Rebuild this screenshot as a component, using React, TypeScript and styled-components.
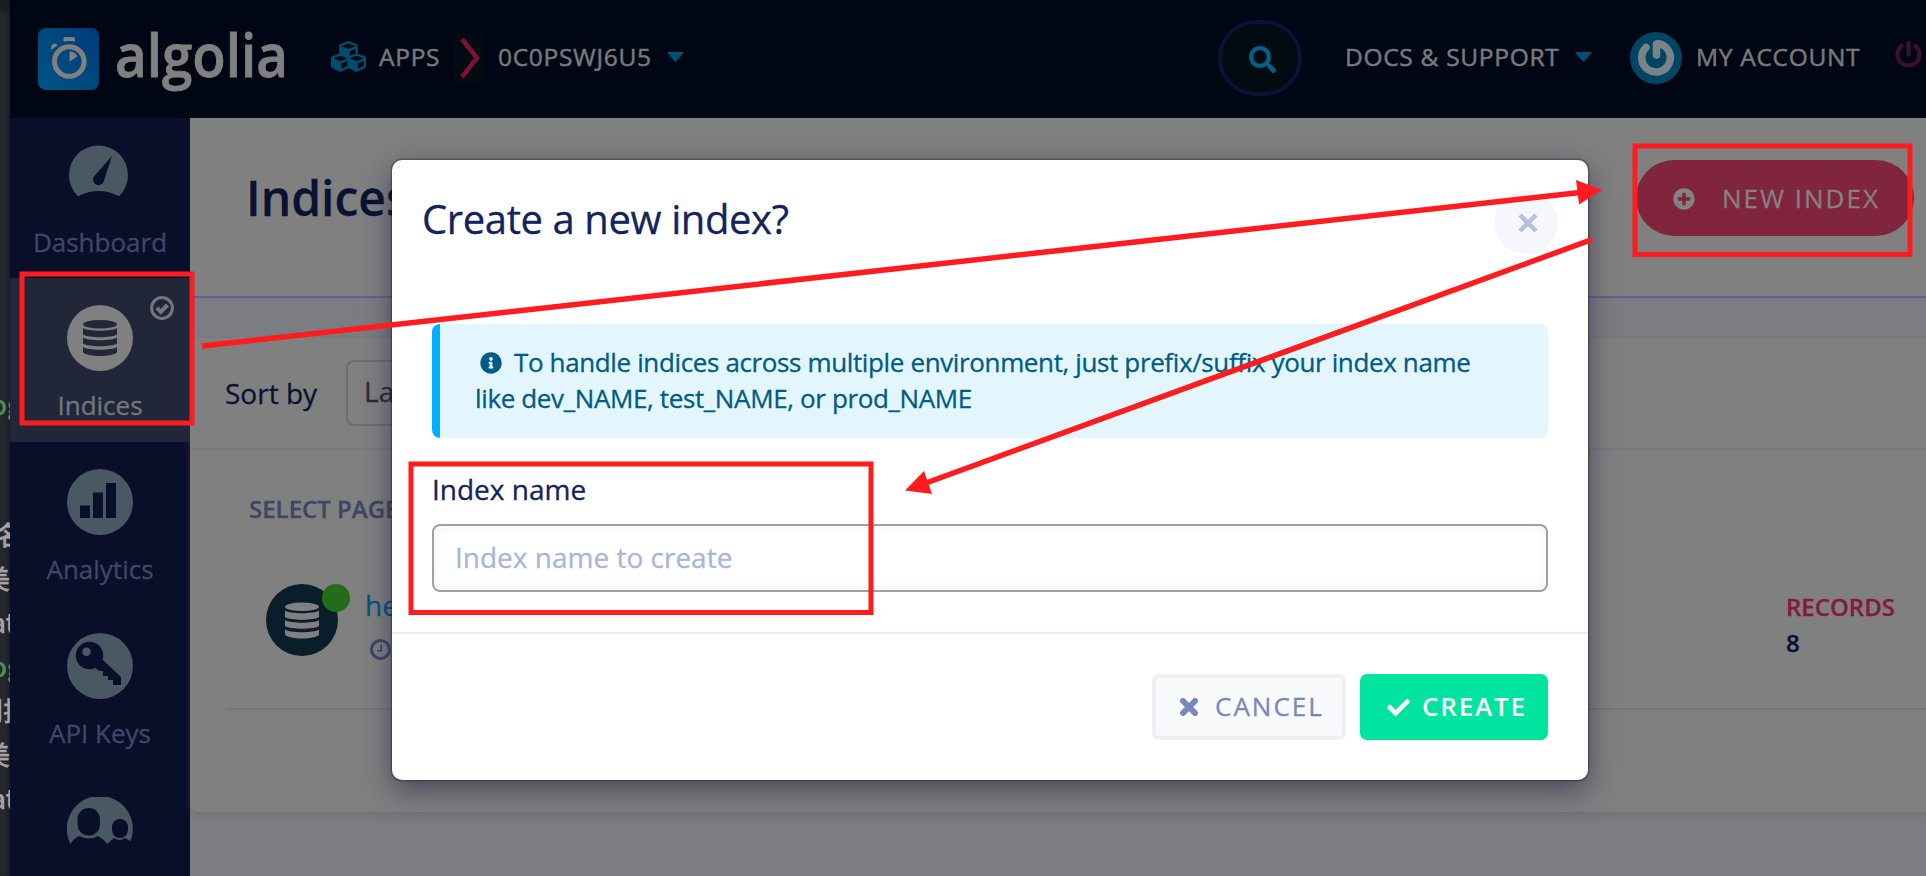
import React from "react";
import styled, { createGlobalStyle } from "styled-components";
import { FaCubes, FaSearch, FaPlusCircle, FaInfoCircle, FaPowerOff, FaCheck } from "react-icons/fa";

const GlobalStyle = createGlobalStyle`
  * { box-sizing: border-box; }
  body { margin: 0; background: #22252d; overflow: hidden; }
  body, button, input { font-family: "Open Sans", "Noto Sans", sans-serif; -webkit-text-stroke: 0.3px; }
`;

const Screen = styled.div`
  position: relative;
  display: flex;
  width: 1926px;
  height: 876px;
  overflow: hidden;
`;

const EditorStrip = styled.aside`
  flex: none;
  width: 10px;
  height: 876px;
  padding-top: 382px;
  overflow: hidden;
  background: linear-gradient(#1b1d20 0 8px, #25272e 14px);
  box-shadow: inset -3px 0 4px -2px #14161b;
`;

const EditorLine = styled.div<{ $green?: boolean; $gap?: number; $shift?: number }>`
  height: 44px;
  margin-top: ${(p) => p.$gap ?? 0}px;
  margin-left: ${(p) => p.$shift ?? 0}px;
  font: 500 26px/44px "Noto Sans CJK SC", sans-serif;
  white-space: nowrap;
  color: ${(p) => (p.$green ? "#4c8f57" : "#a3a3a3")};
`;

const Page = styled.div`
  flex: 1;
  display: flex;
  flex-direction: column;
`;

const TopBar = styled.header`
  display: flex;
  align-items: center;
  height: 118px;
  padding: 0 0 0 28px;
  background: #000613;
  white-space: nowrap;
  overflow: hidden;
`;

const TopLink = styled.span<{ $w: number; $ml: number }>`
  width: ${(p) => p.$w}px;
  margin-left: ${(p) => p.$ml}px;
  flex: none;
  font-size: 24.5px;
  letter-spacing: 0.7px;
  line-height: 34px;
  margin-top: -5px;
  color: #77797e;
  -webkit-text-stroke: 0.5px;
`;

const TopIcon = styled.span<{ $w: number; $ml: number; $c: string; $mt?: number }>`
  display: flex;
  flex: none;
  width: ${(p) => p.$w}px;
  margin-left: ${(p) => p.$ml}px;
  margin-top: ${(p) => p.$mt ?? 0}px;
  color: ${(p) => p.$c};
  svg { display: block; flex: none; }
`;

const SearchButton = styled.button`
  display: flex;
  align-items: center;
  justify-content: center;
  flex: none;
  width: 84px;
  height: 76px;
  margin: -2px 0 0 534px;
  padding: 2px 0 0 4px;
  border: 4px solid #091335;
  border-radius: 38px;
  background: #020a12;
  color: #00618b;
  font-size: 27px;
`;

const Body = styled.div`
  flex: 1;
  display: flex;
  min-height: 0;
`;

const Sidebar = styled.nav`
  flex: none;
  width: 180px;
  background: #090f28;
  overflow: hidden;
`;

const NavItem = styled.div<{ $active?: boolean; $first?: boolean }>`
  position: relative;
  height: ${(p) => (p.$first ? 160 : 164)}px;
  padding-top: ${(p) => (p.$first ? 22 : 27)}px;
  display: flex;
  flex-direction: column;
  align-items: center;
  background: ${(p) => (p.$active ? "#212639" : "transparent")};
  color: ${(p) => (p.$active ? "#73767f" : "#40476a")};
  font-size: 26px;
  line-height: 36px;
  svg { display: block; }
`;

const NavLabel = styled.span<{ $mt?: number }>`
  margin-top: ${(p) => p.$mt ?? 16}px;
  white-space: nowrap;
`;

const ActiveMark = styled.span`
  position: absolute;
  right: 16px;
  top: 18px;
`;

const Main = styled.main`
  flex: 1;
  display: flex;
  flex-direction: column;
  background: #7c7d82;
  min-width: 0;
`;

const PageHeader = styled.section`
  display: flex;
  align-items: flex-start;
  justify-content: space-between;
  flex: none;
  height: 180px;
  padding: 42px 12px 0 59px;
  background: #808080;
  border-bottom: 2px solid #62638a;
`;

const PageTitle = styled.h1`
  margin: -2px 0 0 -3px;
  font-size: 48px;
  line-height: 80px;
  font-weight: 600;
  color: #091231;
`;

const NewIndexButton = styled.button`
  display: flex;
  align-items: center;
  width: 278px;
  height: 76px;
  padding: 0 0 1px 37px;
  border: 0;
  border-radius: 38px;
  background: #80253d;
  color: #858183;
  font-size: 26px;
  letter-spacing: 2px;
  white-space: nowrap;
  svg { font-size: 22px; margin: 2px 27px 0 0; flex: none; }
`;

const Panel = styled.section`
  flex: none;
  height: 474px;
  margin-top: 40px;
  background: #808080;
  border-radius: 0 0 0 8px;
  box-shadow: 0 4px 8px -2px rgba(95, 95, 100, 0.5);
`;

const SortRow = styled.div`
  display: flex;
  align-items: center;
  height: 112px;
  padding: 0 0 1px 35px;
  border-bottom: 2px solid #7a7a82;
  font-size: 28px;
  color: #091231;
`;

const SortSelect = styled.div`
  width: 300px;
  height: 66px;
  margin-left: 29px;
  padding-left: 16px;
  border: 2px solid #6d6d6d;
  border-radius: 8px;
  line-height: 59px;
  color: #2b2d33;
`;

const SelectRow = styled.div`
  padding: 43px 0 0 59px;
  height: 120px;
  font-size: 24px;
  line-height: 32px;
  font-weight: 600;
  color: #3e4565;
`;

const IndexRow = styled.div`
  display: flex;
  margin-left: 36px;
  padding: 14px 0 0 40px;
  height: 140px;
  border-bottom: 2px solid #77777a;
`;

const IndexAvatar = styled.div`
  position: relative;
  display: flex;
  align-items: center;
  justify-content: center;
  width: 72px;
  height: 72px;
  border-radius: 50%;
  background: #0a1d2b;
`;

const StatusDot = styled.i`
  position: absolute;
  right: -12px;
  top: 0;
  width: 28px;
  height: 28px;
  border-radius: 50%;
  background: #256b1c;
`;

const IndexMeta = styled.div`
  margin: 2px 0 0 27px;
  font-size: 28px;
  line-height: 38px;
  color: #005681;
  svg { display: block; margin: 15px 0 0 5px; color: #3e4565; }
`;

const Records = styled.div`
  margin: 5px 28px 0 auto;
  width: 112px;
  font-size: 24px;
  line-height: 36px;
  font-weight: 600;
  color: #831a3e;
  b { display: block; color: #051233; font-weight: 600; }
`;

const Modal = styled.div`
  position: absolute;
  left: 392px;
  top: 160px;
  width: 1196px;
  height: 620px;
  display: flex;
  flex-direction: column;
  border-radius: 10px;
  background: #fff;
  box-shadow: 0 0 0 1.5px rgba(0, 0, 0, 0.25), 0 10px 30px rgba(35, 28, 62, 0.6);
`;

const ModalHeader = styled.div`
  display: flex;
  justify-content: space-between;
  height: 164px;
  padding: 30px 30px 0 30px;
`;

const ModalTitle = styled.h2`
  margin: 3px 0 0;
  font-size: 40px;
  line-height: 52px;
  font-weight: 400;
  letter-spacing: -0.4px;
  color: #14235a;
`;

const CloseButton = styled.button`
  display: flex;
  align-items: center;
  justify-content: center;
  width: 64px;
  height: 64px;
  padding: 2px 0 0 3px;
  border: 0;
  border-radius: 50%;
  background: #f5f7fd;
  color: #b5bfde;
`;

const ModalBody = styled.div`
  flex: 1;
  padding: 0 40px;
`;

const Notice = styled.div`
  height: 114px;
  padding: 20px 35px;
  border-left: 8px solid #00b0ff;
  border-radius: 8px;
  background: #e3f6fe;
  font-size: 26px;
  line-height: 36px;
  letter-spacing: -0.37px;
  color: #005b85;
  white-space: nowrap;
  svg { margin: 0 12px 0 5px; font-size: 22px; vertical-align: -2px; }
`;

const FieldLabel = styled.label`
  display: block;
  margin-top: 32px;
  height: 54px;
  font-size: 28px;
  line-height: 38px;
  color: #14235a;
`;

const TextInput = styled.input`
  display: block;
  width: 100%;
  height: 68px;
  padding: 0 20px 3px 21px;
  border: 2px solid #a0a0a0;
  border-radius: 8px;
  box-shadow: inset 0 0 12px rgba(0, 0, 0, 0.06);
  font-size: 28px;
  outline: 0;
  &::placeholder { color: #a9b6da; opacity: 1; }
`;

const ModalFooter = styled.div`
  display: flex;
  justify-content: flex-end;
  gap: 14px;
  height: 148px;
  padding: 40px 40px 0;
  border-top: 2px solid #e8ecf1;
`;

const ActionButton = styled.button<{ $primary?: boolean }>`
  display: flex;
  align-items: center;
  width: ${(p) => (p.$primary ? 188 : 194)}px;
  height: 66px;
  padding: 0 0 2px ${(p) => (p.$primary ? 27 : 23)}px;
  border: ${(p) => (p.$primary ? "0" : "4px solid #eff0f7")};
  border-radius: 7px;
  background: ${(p) => (p.$primary ? "#00e4a0" : "#f9fafc")};
  color: ${(p) => (p.$primary ? "#fff" : "#7888bd")};
  font-size: 26px;
  font-weight: ${(p) => (p.$primary ? 600 : 400)};
  letter-spacing: ${(p) => (p.$primary ? 1.8 : 2)}px;
  -webkit-text-stroke: ${(p) => (p.$primary ? 0 : 0.3)}px;
  white-space: nowrap;
  svg { flex: none; margin: 2px ${(p) => (p.$primary ? 12 : 16)}px 0 0; }
`;

const Annotations = styled.svg`
  position: absolute;
  inset: 0;
  pointer-events: none;
`;

const Disc = ({ fill, children }: { fill: string; children: React.ReactNode }) => (
  <svg width="66" height="66" viewBox="0 0 66 66">
    <circle cx="33" cy="33" r="33" fill={fill} />
    {children}
  </svg>
);

const Stack = ({ fill }: { fill: string }) => (
  <g fill={fill}>
    <ellipse cx="17" cy="4.3" rx="17" ry="4.3" />
    <path d="M0 8c5 3.600 29 3.600 34 0v6.500c-5 3.600-29 3.600-34 0z" />
    <path d="M0 17.500c5 3.600 29 3.600 34 0v6c-5 3.600-29 3.600-34 0z" />
    <path d="M0 27c5 3.600 29 3.600 34 0v5.500c-5 4.600-29 4.600-34 0z" />
  </g>
);

const Caret = () => (
  <svg width="17" height="10" viewBox="0 0 17 10"><path d="M1 0h15q1 0 .5 1L9 9.500q-.5.500-1 0L.5 1Q0 0 1 0z" fill="currentColor" /></svg>
);

const CheckRing = () => (
  <svg width="24" height="24" viewBox="0 0 24 24" fill="none" stroke="currentColor">
    <circle cx="12" cy="12" r="10.400" strokeWidth="3" />
    <path d="M6.800 11.800l4 4 6.700-6.800" strokeWidth="4" />
  </svg>
);

const ClockRing = () => (
  <svg width="21" height="21" viewBox="0 0 21 21" fill="none" stroke="currentColor">
    <circle cx="10.500" cy="10.500" r="9" strokeWidth="3" />
    <path d="M11.200 5.500v6.200H7" strokeWidth="1.600" />
  </svg>
);

const Logo = () => (
  <svg width="250" height="76" viewBox="0 0 250 76">
    <defs>
      <linearGradient id="tile" x1="0" y1="1" x2="1" y2="0">
        <stop offset="0" stopColor="#005583" />
        <stop offset="1" stopColor="#003a7a" />
      </linearGradient>
    </defs>
    <rect x="0" y="7" width="61" height="62" rx="8" fill="url(#tile)" />
    <circle cx="31.300" cy="40.500" r="14.800" fill="none" stroke="#808080" strokeWidth="5" />
    <path d="M25.500 20.500v-2.500q0-2 2-2h7.500q2 0 2 2v2.500q-5.700-1-11.500 0z" fill="#808080" />
    <path d="M14 28.500l-1-1.200q-.5-2.500 2-4.300 2-1.200 3.800.3l.8.900z" fill="#808080" />
    <path d="M31.500 30.300q5.500.5 8 5l-8 5.500z" fill="#808080" />
    <text x="77" y="56" fontFamily="Open Sans, sans-serif" fontSize="59" fontWeight="600" textLength="173" lengthAdjust="spacingAndGlyphs" fill="#808080" stroke="#808080" strokeWidth="0.8">algolia</text>
  </svg>
);

const PowerAvatar = () => (
  <svg width="52" height="52" viewBox="0 0 52 52">
    <circle cx="26" cy="26" r="26" fill="#004563" />
    <path d="M16 15.500A14.300 14.300 0 1 0 28.500 11.600L26.500 12V23" fill="none" stroke="#7a8486" strokeWidth="7.500" strokeLinecap="round" strokeLinejoin="round" />
  </svg>
);

export default function App() {
  return (
    <Screen>
      <GlobalStyle />
      <EditorStrip>
        <EditorLine $green $shift={-9}>og</EditorLine>
        <EditorLine $gap={86} $shift={-3}>名</EditorLine>
        <EditorLine $shift={-16}>美</EditorLine>
        <EditorLine $shift={-9}>at</EditorLine>
        <EditorLine $green $shift={-9}>og</EditorLine>
        <EditorLine $shift={-23}>到排</EditorLine>
        <EditorLine $shift={-16}>美</EditorLine>
        <EditorLine $shift={-9}>at</EditorLine>
      </EditorStrip>
      <Page>
        <TopBar>
          <Logo />
          <TopIcon $w={35} $ml={43} $c="#004d6e" $mt={-6}><FaCubes size={35} /></TopIcon>
          <TopLink $w={61} $ml={13}>APPS</TopLink>
          <TopIcon $w={30} $ml={14} $c="#7e1236" $mt={-2}>
            <svg width="30" height="48" viewBox="0 0 30 48">
              <rect width="30" height="48" fill="#020a12" />
              <path d="M8 5l15 19L8 43" fill="none" stroke="currentColor" strokeWidth="4.500" />
            </svg>
          </TopIcon>
          <TopLink $w={152} $ml={14}>0C0PSWJ6U5</TopLink>
          <TopIcon $w={17} $ml={17} $c="#005074" $mt={-5}><Caret /></TopIcon>
          <SearchButton><FaSearch /></SearchButton>
          <TopLink $w={214} $ml={43}>DOCS &amp; SUPPORT</TopLink>
          <TopIcon $w={17} $ml={16} $c="#005074" $mt={-5}><Caret /></TopIcon>
          <TopIcon $w={52} $ml={38} $c="#004563" $mt={-2}><PowerAvatar /></TopIcon>
          <TopLink $w={166} $ml={14}>MY ACCOUNT</TopLink>
          <TopIcon $w={26} $ml={33} $c="#3b1228" $mt={-9}><FaPowerOff size={27} /></TopIcon>
        </TopBar>
        <Body>
          <Sidebar>
            <NavItem $first>
              <svg width="66" height="60" viewBox="0 0 66 60">
                <path d="M10 56.300A29.500 29.500 0 1 1 51 56.300Q31 45.500 10 56.300z" transform="translate(1 0)" fill="#4a5864" />
                <path d="M45 16L36.500 42a5.500 5.500 0 1 1-10-5z" fill="#090f28" />
              </svg>
              <NavLabel $mt={24}>Dashboard</NavLabel>
            </NavItem>
            <NavItem $active>
              <ActiveMark><CheckRing /></ActiveMark>
              <Disc fill="#808080"><g transform="translate(16 15)"><Stack fill="#212639" /></g></Disc>
              <NavLabel>Indices</NavLabel>
            </NavItem>
            <NavItem>
              <Disc fill="#4a5864"><path d="M13 36.500h10V49H13zM26 23.500h10V49H26zM39 14h10v35H39z" fill="#090f28" /></Disc>
              <NavLabel>Analytics</NavLabel>
            </NavItem>
            <NavItem>
              <Disc fill="#4a5864">
                <path d="M36 27L54 44v8h-8v-5h-5v-4h-5v-5h-4l-5-4z" fill="#090f28" />
                <circle cx="22.500" cy="22.500" r="13.800" fill="#090f28" />
                <circle cx="19.500" cy="18.700" r="4.300" fill="#4a5864" />
              </Disc>
              <NavLabel>API Keys</NavLabel>
            </NavItem>
            <NavItem>
              <svg width="66" height="60" viewBox="0 0 66 60">
                <path d="M3.500 47A33 33 0 1 1 63.500 44Q58 41 58 41Q53 45 47 41L40 47Q37 42 31 39Q22 44 12.500 39Q7 41 3.500 47z" fill="#4a5864" />
                <rect x="10.500" y="11" width="22.500" height="27.500" rx="11.200" fill="#090f28" />
                <rect x="45" y="22" width="16" height="19" rx="8" fill="#090f28" />
              </svg>
            </NavItem>
          </Sidebar>
          <Main>
            <PageHeader>
              <PageTitle>Indices</PageTitle>
              <NewIndexButton><FaPlusCircle />NEW INDEX</NewIndexButton>
            </PageHeader>
            <Panel>
              <SortRow>Sort by<SortSelect>Last</SortSelect></SortRow>
              <SelectRow>SELECT PAGE</SelectRow>
              <IndexRow>
                <IndexAvatar>
                  <svg width="34" height="37" viewBox="0 0 34 36"><Stack fill="#808080" /></svg>
                  <StatusDot />
                </IndexAvatar>
                <IndexMeta>he<ClockRing /></IndexMeta>
                <Records>RECORDS<b>8</b></Records>
              </IndexRow>
            </Panel>
          </Main>
        </Body>
      </Page>
      <Modal>
        <ModalHeader>
          <ModalTitle>Create a new index?</ModalTitle>
          <CloseButton>
            <svg width="20" height="20" viewBox="0 0 20 20"><path d="M2 2l16 16M18 2L2 18" stroke="currentColor" strokeWidth="4.500" /></svg>
          </CloseButton>
        </ModalHeader>
        <ModalBody>
          <Notice>
            <FaInfoCircle />To handle indices across multiple environment, just prefix/suffix your index name
            <br />like dev_NAME, test_NAME, or prod_NAME
          </Notice>
          <FieldLabel>Index name</FieldLabel>
          <TextInput placeholder="Index name to create" />
        </ModalBody>
        <ModalFooter>
          <ActionButton>
            <svg width="20" height="18" viewBox="0 0 20 18"><path d="M4 3l12 12M16 3L4 15" stroke="currentColor" strokeWidth="6" strokeLinecap="round" /></svg>
            CANCEL
          </ActionButton>
          <ActionButton $primary><FaCheck size={23} />CREATE</ActionButton>
        </ModalFooter>
      </Modal>
      <Annotations width="1926" height="876" viewBox="0 0 1926 876" fill="none" stroke="#ff1c1f" strokeWidth="5">
        <rect x="22" y="274" width="170" height="149" />
        <rect x="1635" y="146" width="275" height="108.500" />
        <rect x="411" y="464" width="460" height="148.500" />
        <path d="M202 346L1580 192.500M1592 239.500L926 483" strokeWidth="5.500" />
        <path d="M1602 190L1576 180L1579 204.500ZM905 490.500L924 471L932 494Z" fill="#ff1c1f" stroke="none" />
      </Annotations>
    </Screen>
  );
}
